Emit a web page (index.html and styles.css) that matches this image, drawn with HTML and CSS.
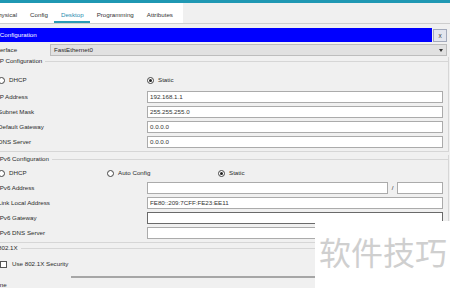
FILE: index.html
```html
<!DOCTYPE html>
<html>
<head>
	<meta charset="utf-8" />
	<title>IP Configuration</title>
	<link rel="stylesheet" href="styles.css">
</head>
<body>
		<div class="topbar"></div>
		<div class="tabs">
			<ul class="tablist">
				<li>Physical</li>
				<li>Config</li>
				<li class="active">Desktop</li>
				<li>Programming</li>
				<li>Attributes</li>
			</ul>
		</div>
		<div class="titlebar">
			<div class="title">IP Configuration</div>
			<div class="close">x</div>
		</div>
		<div class="row iface">
			<label>Interface</label>
			<div class="select">FastEthernet0<span class="arrow"></span></div>
		</div>

		<div class="group">
			<div class="group-head"><span>IP Configuration</span></div>
			<div class="row radios">
				<span class="opt v4-dhcp"><i class="radio"></i>DHCP</span>
				<span class="opt"><i class="radio on"></i>Static</span>
			</div>
			<div class="fields">
				<div class="row field"><label>IP Address</label><div class="input">192.168.1.1</div></div>
				<div class="row field"><label>Subnet Mask</label><div class="input">255.255.255.0</div></div>
				<div class="row field"><label>Default Gateway</label><div class="input">0.0.0.0</div></div>
				<div class="row field"><label>DNS Server</label><div class="input">0.0.0.0</div></div>
			</div>
		</div>

		<div class="group v6">
			<div class="group-head"><span>IPv6 Configuration</span></div>
			<div class="row radios">
				<span class="opt v6-dhcp"><i class="radio"></i>DHCP</span>
				<span class="opt v6-auto"><i class="radio"></i>Auto Config</span>
				<span class="opt"><i class="radio on"></i>Static</span>
			</div>
			<div class="fields">
				<div class="row field">
					<label>IPv6 Address</label>
					<div class="input"></div>
					<span class="slash">/</span>
					<div class="input prefix"></div>
				</div>
				<div class="row field"><label>Link Local Address</label><div class="input">FE80::209:7CFF:FE23:EE11</div></div>
				<div class="row field"><label>IPv6 Gateway</label><div class="input focus"></div></div>
				<div class="row field"><label>IPv6 DNS Server</label><div class="input"></div></div>
			</div>
		</div>

		<div class="group dot1x">
			<div class="group-head"><span>802.1X</span></div>
			<div class="row check">
				<i class="checkbox"></i>Use 802.1X Security
			</div>
			<div class="bar"></div>
			<div class="more">Line</div>
		</div>

		<div class="watermark">软件技巧</div>
</body>
</html>
```

FILE: styles.css
```css
body,ul,li{
	margin:0;
	padding:0;
}
li{
	list-style: none;
}
body{
	width:450px;height:288px;
	overflow:hidden;
	position:relative;
	background-color:#f0f0f0;
	color:#2b2b2b;
	font-family:"Liberation Sans", Arial, sans-serif;
	font-size:6.2px;
	line-height:8px;
}
.topbar{
	height:3px;
	background-color:#1f98b3;
}
.tabs{
	height:20px;
	border-bottom:1px solid #cdcdcd;
}
.tablist{
	display:inline-flex;
	height:20px;
	margin-left:-12.5px;
	padding-right:4px;
	background-color:#fff;
}
.tablist li{
	padding:8px 6.5px 0;
	height:12px;
	color:#333;
}
.tablist .active{
	color:#2a8cb0;
	border-bottom:2px solid #2a9bb5;
	height:10px;
}
.titlebar{
	display:flex;
	height:14px;
	margin-top:4px;
}
.title{
	flex:1;
	background-color:#0000ff;
	color:#fff;
	line-height:14px;
	text-indent:-7.6px;
	white-space:nowrap;
}
.close{
	width:12px;height:11px;
	margin:1px 3px 0 1px;
	background-color:#e3e6ee;
	border:1px solid #a3aabb;
	color:#444;
	font-size:6.5px;
	line-height:11px;
	text-align:center;
}
.row{
	display:flex;
	align-items:center;
	height:12px;
}
.iface{
	margin-top:2px;
	margin-right:3px;
}
.iface label{
	width:57px;
	margin-left:-7px;
	flex:none;
}
.select{
	flex:1;
	height:12px;
	box-sizing:border-box;
	display:flex;
	align-items:center;
	justify-content:space-between;
	padding-left:3px;
	background-color:#e1e1e1;
	border:1px solid #bdbdbd;
}
.arrow{
	width:0;height:0;
	margin-right:3px;
	border-left:2px solid transparent;
	border-right:2px solid transparent;
	border-top:3px solid #333;
}
.group{
	margin:1px 1px 0 -6px;
	padding:0 5px 3px 3px;
	border:1px solid #d6d6d6;
	border-top:0;
}
.group.v6{
	margin-top:3px;
}
.group.dot1x{
	margin-top:1px;
	border-bottom:0;
}
.group-head{
	display:flex;
	align-items:center;
	height:8px;
	margin-right:-6px;
}
.group-head::after{
	content:"";
	flex:1;
	height:1px;
	margin-left:3px;
	background-color:#d6d6d6;
}
.radios{
	margin-top:9px;
}
.v6 .radios{
	margin-top:4px;
}
.opt{
	display:flex;
	align-items:center;
}
.v4-dhcp{
	width:149px;
}
.v6-dhcp{
	width:109px;
}
.v6-auto{
	width:111px;
}
.radio{
	width:5px;height:5px;
	margin-right:4px;
	border:1px solid #444;
	border-radius:50%;
	background-color:#fff;
	position:relative;
}
.radio.on::after{
	content:"";
	position:absolute;
	left:1px;top:1px;
	width:3px;height:3px;
	border-radius:50%;
	background-color:#222;
}
.fields{
	margin-top:5px;
}
.v6 .fields{
	margin-top:3px;
}
.field + .field{
	margin-top:3px;
}
.field label{
	width:149px;
	flex:none;
	white-space:nowrap;
}
.input{
	flex:1;
	height:12px;
	box-sizing:border-box;
	padding-left:2px;
	background-color:#fff;
	border:1px solid #ababab;
	color:#333;
	line-height:10px;
	white-space:nowrap;
}
.input.focus{
	border-color:#6a6a6a;
}
.slash{
	width:9px;
	text-align:center;
}
.input.prefix{
	flex:none;
	width:46px;
}
.check{
	margin-top:6px;
}
.checkbox{
	width:5px;height:5px;
	margin:0 5px 0 2px;
	border:1px solid #555;
	background-color:#fff;
}
.bar{
	height:2px;
	margin:6px -5px 0 73px;
	background-color:#a6a6a6;
}
.more{
	margin-top:3px;
	text-indent:-3px;
}
.watermark{
	position:absolute;
	left:315px;top:221px;right:0;bottom:0;
	padding:14px 0 0 4px;
	background-color:#fff;
	color:#cfcfcf;
	font-family:"Noto Sans CJK SC", sans-serif;
	font-size:32px;
	line-height:32px;
	white-space:nowrap;
}
```
